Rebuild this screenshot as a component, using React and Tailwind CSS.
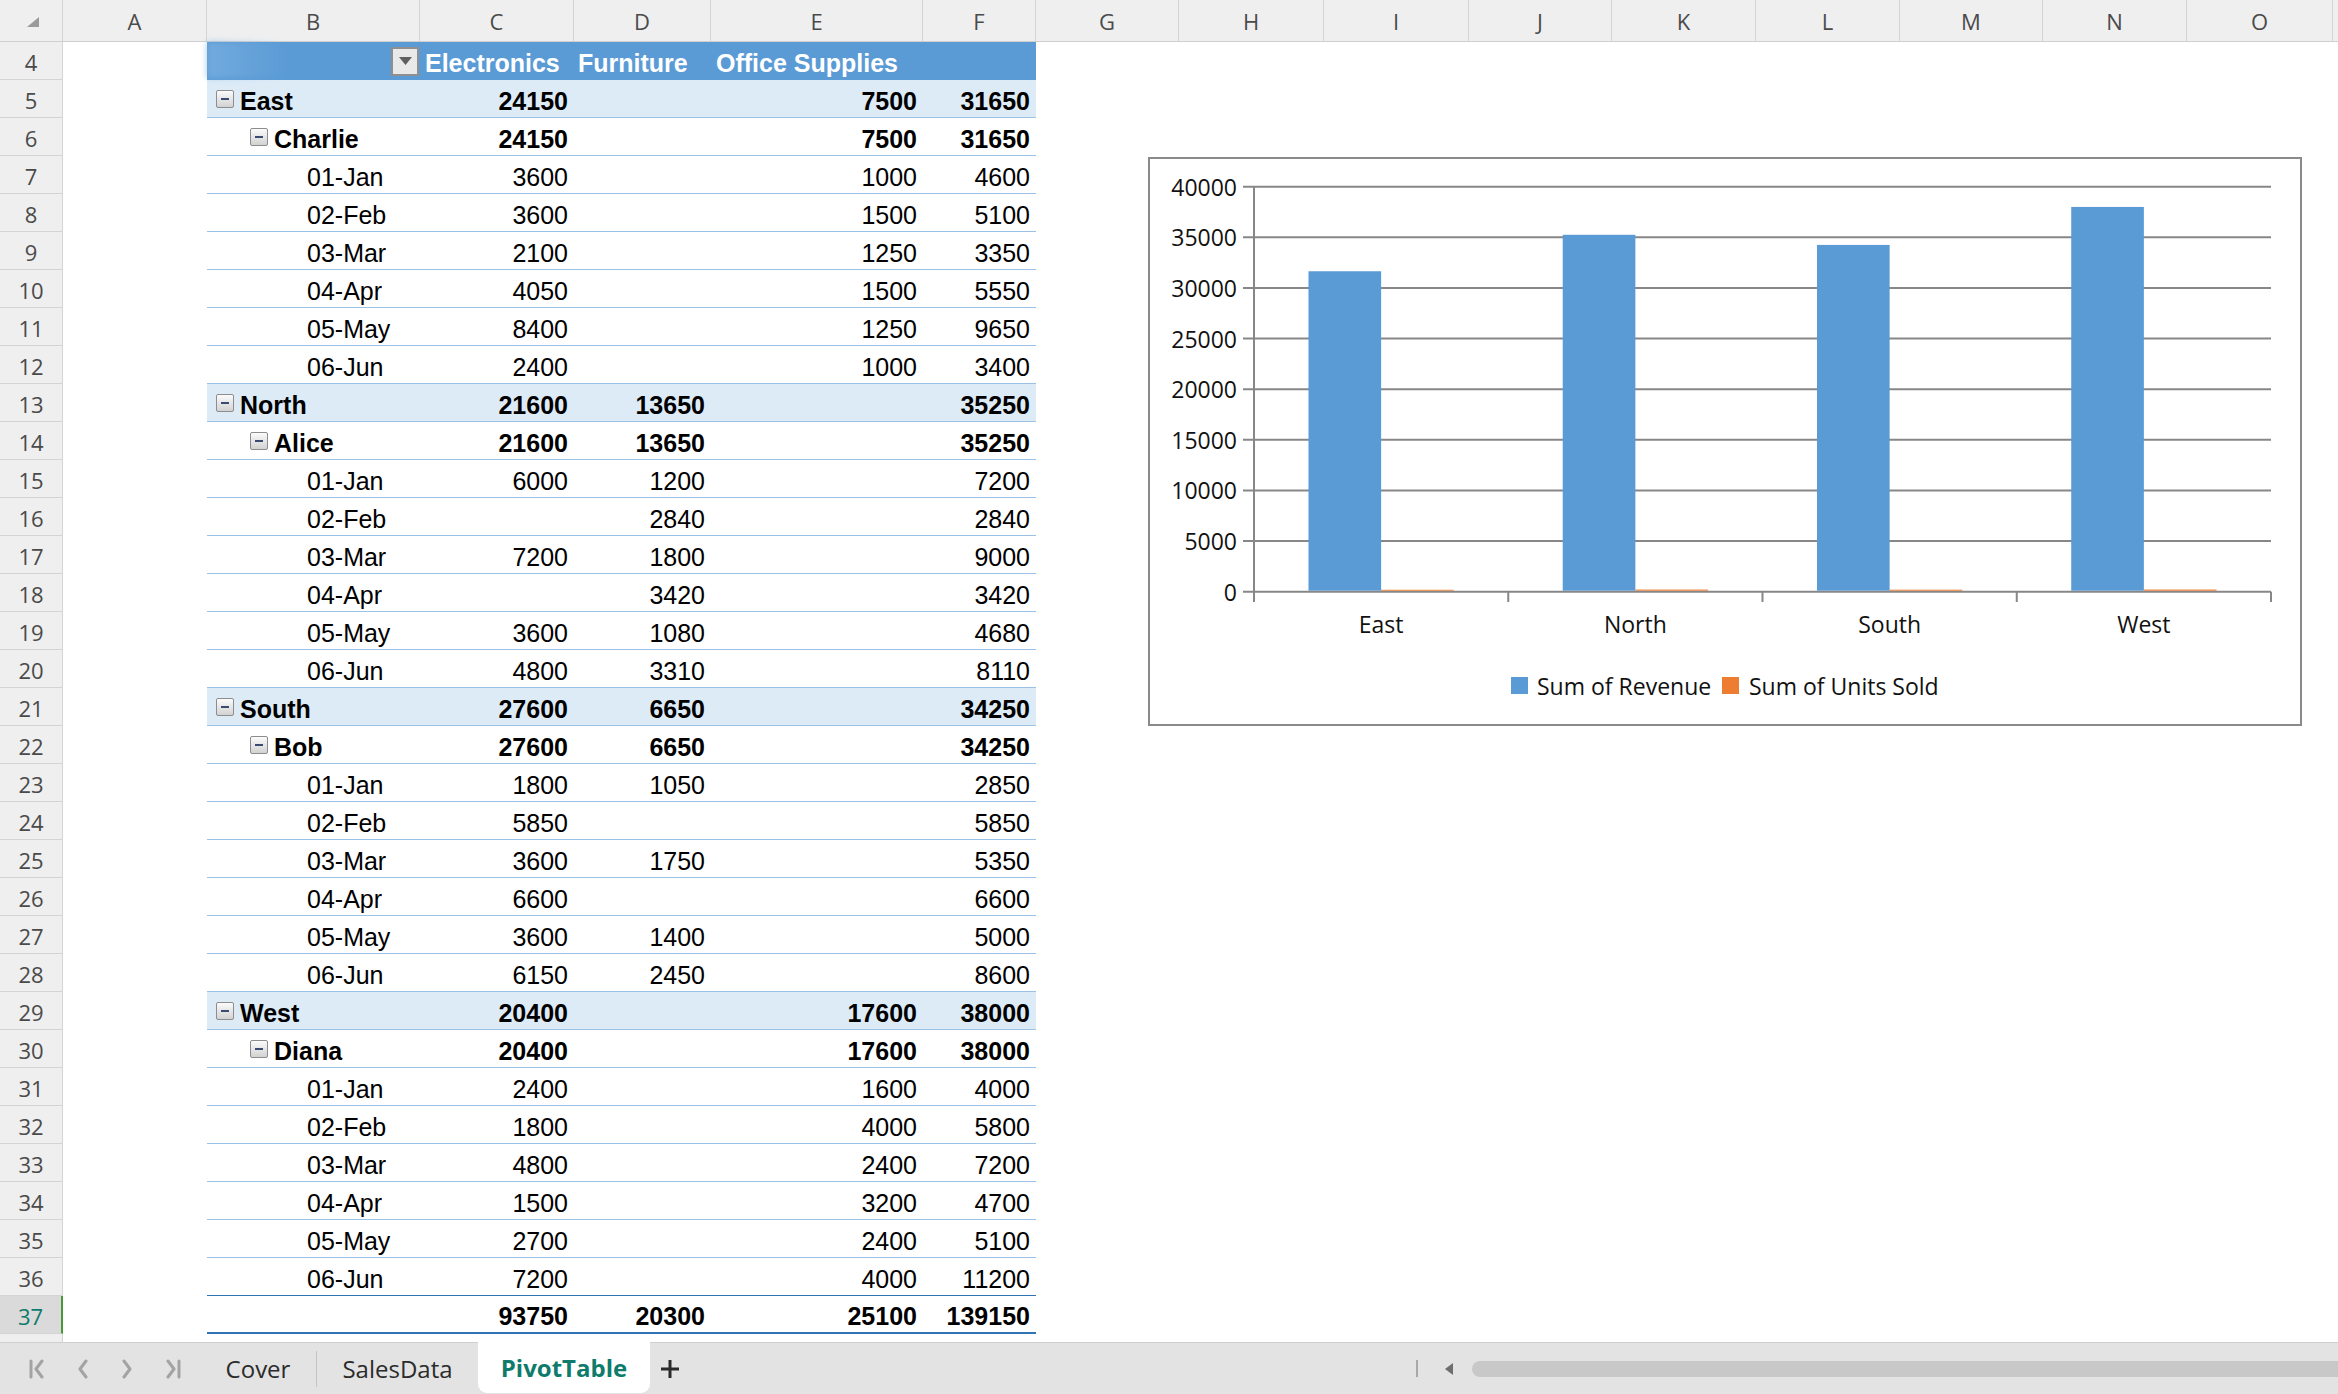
import React from "react";

const COLS = [
  { l: "A", w: "w-[144px]" },
  { l: "B", w: "w-[213px]" },
  { l: "C", w: "w-[154px]" },
  { l: "D", w: "w-[137px]" },
  { l: "E", w: "w-[212px]" },
  { l: "F", w: "w-[113px]" },
  { l: "G", w: "w-[143px]" },
  { l: "H", w: "w-[145px]" },
  { l: "I", w: "w-[145px]" },
  { l: "J", w: "w-[143px]" },
  { l: "K", w: "w-[144px]" },
  { l: "L", w: "w-[144px]" },
  { l: "M", w: "w-[143px]" },
  { l: "N", w: "w-[144px]" },
  { l: "O", w: "w-[146px]" },
  { l: "", w: "w-[120px]" },
];

const DATES = ["01-Jan", "02-Feb", "03-Mar", "04-Apr", "05-May", "06-Jun"];

const GROUPS = [
  {
    region: "East",
    rep: "Charlie",
    total: [24150, null, 7500, 31650],
    days: [
      [3600, null, 1000, 4600],
      [3600, null, 1500, 5100],
      [2100, null, 1250, 3350],
      [4050, null, 1500, 5550],
      [8400, null, 1250, 9650],
      [2400, null, 1000, 3400],
    ],
  },
  {
    region: "North",
    rep: "Alice",
    total: [21600, 13650, null, 35250],
    days: [
      [6000, 1200, null, 7200],
      [null, 2840, null, 2840],
      [7200, 1800, null, 9000],
      [null, 3420, null, 3420],
      [3600, 1080, null, 4680],
      [4800, 3310, null, 8110],
    ],
  },
  {
    region: "South",
    rep: "Bob",
    total: [27600, 6650, null, 34250],
    days: [
      [1800, 1050, null, 2850],
      [5850, null, null, 5850],
      [3600, 1750, null, 5350],
      [6600, null, null, 6600],
      [3600, 1400, null, 5000],
      [6150, 2450, null, 8600],
    ],
  },
  {
    region: "West",
    rep: "Diana",
    total: [20400, null, 17600, 38000],
    days: [
      [2400, null, 1600, 4000],
      [1800, null, 4000, 5800],
      [4800, null, 2400, 7200],
      [1500, null, 3200, 4700],
      [2700, null, 2400, 5100],
      [7200, null, 4000, 11200],
    ],
  },
];

const ROWS = [];
GROUPS.forEach((g) => {
  ROWS.push({ type: "region", label: g.region, v: g.total });
  ROWS.push({ type: "rep", label: g.rep, v: g.total });
  g.days.forEach((d, i) => ROWS.push({ type: "date", label: DATES[i], v: d }));
});
ROWS[ROWS.length - 1].beforeTotal = true;
ROWS.push({ type: "total", label: "", v: [93750, 20300, 25100, 139150] });

const VAL_W = ["w-[154px]", "w-[137px]", "w-[212px]", "w-[113px]"];

const Toggle = () => (
  <span className="flex h-[18px] w-[18px] shrink-0 items-center justify-center rounded-[2px] border border-[#8d8d8d] bg-linear-to-b from-[#fbfbfb] to-[#d2d2d2]">
    <span className="h-[2px] w-[8px] bg-[#3a4b72]" />
  </span>
);

const PivotRow = ({ row }) => {
  let cls = "border-b border-[#9bc2e6]";
  if (row.type === "region") cls = "bg-[#ddebf7] font-bold border-b border-[#9bc2e6]";
  if (row.type === "rep") cls = "font-bold border-b border-[#9bc2e6]";
  if (row.beforeTotal) cls = "border-b border-[#2f75b5]";
  if (row.type === "total") cls = "font-bold border-b-2 border-[#2f75b5]";

  return (
    <div className={`flex h-[38px] items-center text-black ${cls}`}>
      <div className="flex w-[213px] items-center">
        {row.type === "region" && (
          <div className="flex items-center gap-[6px] pl-[9px]">
            <Toggle />
            <span className="pt-[5px]">{row.label}</span>
          </div>
        )}
        {row.type === "rep" && (
          <div className="flex items-center gap-[6px] pl-[43px]">
            <Toggle />
            <span className="pt-[5px]">{row.label}</span>
          </div>
        )}
        {row.type === "date" && <span className="pl-[100px] pt-[5px]">{row.label}</span>}
      </div>
      {row.v.map((v, i) => (
        <div key={i} className={`${VAL_W[i]} pr-[6px] pt-[5px] text-right`}>
          {v == null ? "" : v}
        </div>
      ))}
    </div>
  );
};

const PivotTable = () => (
  <div className="ml-[144px] w-[829px] font-['Liberation_Sans',Arial,sans-serif] text-[25px] leading-none">
    <div className="relative flex h-[38px] items-center bg-[#5b9bd5] font-bold text-white">
      {/* faded patch left over in the row label cell */}
      <div className="absolute left-0 top-0 h-[36px] w-[80px] bg-linear-to-r from-[#7cb1e2] to-transparent opacity-70 blur-[3px]" />
      <div className="relative flex h-full w-[213px] items-center justify-end pr-[1px]">
        <span className="flex h-[29px] w-[28px] items-center justify-center border-2 border-[#8f8f8f] bg-[#e9e9e9]">
          <svg width="13" height="8" viewBox="0 0 13 8">
            <polygon points="0,0 13,0 6.5,8" fill="#5f5f5f" />
          </svg>
        </span>
      </div>
      <div className="w-[154px] pl-[5px] pt-[4px]">Electronics</div>
      <div className="w-[137px] pl-[4px] pt-[4px]">Furniture</div>
      <div className="w-[212px] pl-[5px] pt-[4px]">Office Supplies</div>
      <div className="w-[113px]" />
    </div>
    {ROWS.map((r, i) => (
      <PivotRow key={i} row={r} />
    ))}
  </div>
);

const CHART = [
  { name: "East", rev: 31650, units: 190 },
  { name: "North", rev: 35250, units: 210 },
  { name: "South", rev: 34250, units: 200 },
  { name: "West", rev: 38000, units: 215 },
];

const Chart = () => {
  const x0 = 104;
  const x1 = 1121;
  const yTop = 27.7;
  const y0 = 432.7;
  const cw = (x1 - x0) / 4;
  const bw = cw / 3.5;
  const yOf = (v) => y0 - (v / 40000) * (y0 - yTop);
  const ticks = [0, 5000, 10000, 15000, 20000, 25000, 30000, 35000, 40000];

  return (
    <div className="absolute left-[1085px] top-[115px] h-[569px] w-[1154px] border-2 border-[#8a8a8a] bg-white">
      <svg className="block h-full w-full font-['Open_Sans',sans-serif]" viewBox="0 0 1150 565">
        {ticks.map((t) => (
          <g key={t}>
            <line x1={93} x2={x1} y1={yOf(t)} y2={yOf(t)} stroke="#878787" strokeWidth="2" />
            <text x={87} y={yOf(t)} textAnchor="end" dominantBaseline="central" fontSize="23" fill="#111">
              {t}
            </text>
          </g>
        ))}
        <line x1={x0} x2={x0} y1={yTop} y2={443} stroke="#878787" strokeWidth="2" />
        {[1, 2, 3, 4].map((i) => (
          <line key={i} x1={x0 + i * cw} x2={x0 + i * cw} y1={y0} y2={443} stroke="#878787" strokeWidth="2" />
        ))}
        {CHART.map((c, i) => {
          const bx = x0 + i * cw + bw * 0.75;
          return (
            <g key={c.name}>
              <rect x={bx} y={yOf(c.rev)} width={bw} height={y0 - 1 - yOf(c.rev)} fill="#5b9bd5" />
              <rect x={bx + bw} y={yOf(c.units)} width={bw} height={y0 - 1 - yOf(c.units)} fill="#ed7d31" />
              <text x={x0 + i * cw + cw / 2} y={465} textAnchor="middle" dominantBaseline="central" fontSize="23" fill="#111">
                {c.name}
              </text>
            </g>
          );
        })}
        <rect x={361} y={518} width={17} height={17} fill="#5b9bd5" />
        <text x={387} y={527} dominantBaseline="central" fontSize="23" fill="#111">
          Sum of Revenue
        </text>
        <rect x={572} y={518} width={17} height={17} fill="#ed7d31" />
        <text x={599} y={527} dominantBaseline="central" fontSize="23" fill="#111">
          Sum of Units Sold
        </text>
      </svg>
    </div>
  );
};

const Chevron = ({ dir, bar }) => (
  <svg width="20" height="20" viewBox="0 0 20 20" fill="none" stroke="#a3a3a3" strokeWidth="3" strokeLinecap="round" strokeLinejoin="round">
    {dir === "left" ? <polyline points="13,2 7,10 13,18" /> : <polyline points="7,2 13,10 7,18" />}
    {bar === "left" && <line x1="2" y1="2" x2="2" y2="18" />}
    {bar === "right" && <line x1="18" y1="2" x2="18" y2="18" />}
  </svg>
);

const TabBar = () => (
  <div className="flex h-[52px] shrink-0 items-center border-t border-[#cfcfcf] bg-[#e3e3e3] font-['Open_Sans',sans-serif] text-[24px]">
    <div className="flex w-[200px] items-center pl-[17px]">
      <div className="flex w-[44px] justify-center">
        <Chevron dir="left" bar="left" />
      </div>
      <div className="flex w-[44px] justify-center">
        <Chevron dir="left" />
      </div>
      <div className="flex w-[44px] justify-center">
        <Chevron dir="right" />
      </div>
      <div className="flex w-[44px] justify-center">
        <Chevron dir="right" bar="right" />
      </div>
    </div>
    <div className="flex w-[116px] justify-center text-[#2b2b2b]">Cover</div>
    <div className="h-[36px] w-px bg-[#c4c4c4]" />
    <div className="flex w-[161px] justify-center text-[#2b2b2b]">SalesData</div>
    <div className="-mt-px flex h-[51px] w-[172px] items-center justify-center self-start rounded-b-[9px] bg-white font-bold text-[#0f7b6c]">
      PivotTable
    </div>
    <div className="flex w-[40px] justify-center">
      <svg width="20" height="20" viewBox="0 0 20 20" stroke="#2a2a2a" strokeWidth="3">
        <line x1="10" y1="1" x2="10" y2="19" />
        <line x1="1" y1="10" x2="19" y2="10" />
      </svg>
    </div>
    <div className="flex-1" />
    <div className="flex items-center">
      <div className="h-[17px] w-[2px] bg-[#a8a8a8]" />
      <svg className="ml-[25px]" width="10" height="12" viewBox="0 0 10 12">
        <polygon points="10,0 10,12 2,6" fill="#6e6e6e" />
      </svg>
      <div className="ml-[19px] h-[16px] w-[866px] rounded-l-full bg-[#c8c8c8]" />
    </div>
  </div>
);

export default function App() {
  const rowNums = [];
  for (let i = 4; i <= 37; i++) rowNums.push(i);

  return (
    <div className="flex h-[1394px] w-[2338px] flex-col overflow-hidden bg-white">
      <div className="flex h-[42px] shrink-0 border-b border-[#cfcfcf] bg-[#efefef] font-['Open_Sans',sans-serif] text-[22px] text-[#4a4a4a]">
        <div className="w-[63px] shrink-0 border-r border-[#d4d4d4] pl-[27px] pt-[17px]">
          <svg width="12" height="10" viewBox="0 0 12 10">
            <polygon points="12,0 12,10 0,10" fill="#9a9a9a" />
          </svg>
        </div>
        {COLS.map((c, i) => (
          <div key={i} className={`${c.w} flex shrink-0 items-center justify-center border-r border-[#d4d4d4] pt-[2px]`}>
            {c.l}
          </div>
        ))}
      </div>

      <div className="flex min-h-0 flex-1">
        <div className="w-[63px] shrink-0 bg-[#efefef] font-['Open_Sans',sans-serif] text-[22px] text-[#4a4a4a]">
          {rowNums.map((n) =>
            n === 37 ? (
              <div key={n} className="flex h-[38px] items-center justify-center border-b border-r-2 border-b-[#d4d4d4] border-r-[#4a9a33] bg-[#dadada] pt-[3px] text-[#0f7b6c]">
                {n}
              </div>
            ) : (
              <div key={n} className="flex h-[38px] items-center justify-center border-b border-r border-[#d4d4d4] pt-[3px]">
                {n}
              </div>
            )
          )}
          <div className="h-full border-r border-[#d4d4d4]" />
        </div>
        <div className="relative flex-1">
          <PivotTable />
          <Chart />
        </div>
      </div>

      <TabBar />
    </div>
  );
}
